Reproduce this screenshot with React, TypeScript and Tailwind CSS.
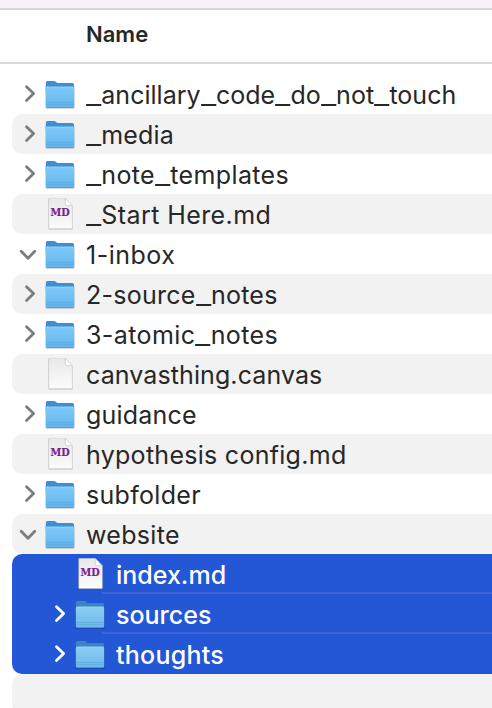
type Kind = 'folder' | 'md' | 'blank';
type Row = {
  name: string;
  kind: Kind;
  open?: boolean;
  nested?: boolean;
  tracking: string;
};

const rows: Row[] = [
  { name: '_ancillary_code_do_not_touch', kind: 'folder', tracking: 'tracking-[0.02px]' },
  { name: '_media', kind: 'folder', tracking: 'tracking-[0.15px]' },
  { name: '_note_templates', kind: 'folder', tracking: 'tracking-[0.36px]' },
  { name: '_Start Here.md', kind: 'md', tracking: 'tracking-[0.42px]' },
  { name: '1-inbox', kind: 'folder', open: true, tracking: 'tracking-[0.5px]' },
  { name: '2-source_notes', kind: 'folder', tracking: 'tracking-[0.25px]' },
  { name: '3-atomic_notes', kind: 'folder', tracking: 'tracking-[0.4px]' },
  { name: 'canvasthing.canvas', kind: 'blank', tracking: 'tracking-[0.1px]' },
  { name: 'guidance', kind: 'folder', tracking: 'tracking-[0.2px]' },
  { name: 'hypothesis config.md', kind: 'md', tracking: 'tracking-[0.28px]' },
  { name: 'subfolder', kind: 'folder', tracking: 'tracking-[0.3px]' },
  { name: 'website', kind: 'folder', open: true, tracking: 'tracking-[0.3px]' },
];

const selected: Row[] = [
  { name: 'index.md', kind: 'md', nested: true, tracking: 'tracking-[0px]' },
  { name: 'sources', kind: 'folder', nested: true, tracking: 'tracking-[0px]' },
  { name: 'thoughts', kind: 'folder', nested: true, tracking: 'tracking-[0.25px]' },
];

function Gradients() {
  return (
    <svg className="absolute h-0 w-0" aria-hidden="true">
      <defs>
        <linearGradient id="front" x1="0" y1="0" x2="0" y2="1">
          <stop offset="0" stopColor="#7fcaf8" />
          <stop offset="1" stopColor="#63b5ee" />
        </linearGradient>
        <linearGradient id="frontSelected" x1="0" y1="0" x2="0" y2="1">
          <stop offset="0" stopColor="#8accf2" />
          <stop offset="1" stopColor="#72b9e8" />
        </linearGradient>
        <linearGradient id="paper" x1="0" y1="0" x2="0" y2="1">
          <stop offset="0" stopColor="#e8e8e8" />
          <stop offset="1" stopColor="#fcfcfc" />
        </linearGradient>
      </defs>
    </svg>
  );
}

function Folder({ active }: { active?: boolean }) {
  return (
    <svg className="h-10 w-8 shrink-0" viewBox="0 0 32 40">
      <path d="M1.500 12H30.500V33.200q0 1.500-1.500 1.500H3Q1.500 34.700 1.500 33.200Z" fill="#000" opacity=".22" />
      <path d="M1.800 8.700Q1.800 7 3.500 7h6.300q1.200 0 2 .8l.8.600q.8.700 1.900.700h13.800q1.700 0 1.700 1.700V18H1.800Z" fill={active ? '#3f85bd' : '#3e8ed2'} />
      <path d="M1.800 14q0-1.300 1.300-1.300h26q1.100 0 1.100 1.300V32.300q0 1.400-1.400 1.400H3.200q-1.400 0-1.400-1.400Z" fill={active ? 'url(#frontSelected)' : 'url(#front)'} />
      <path d="M2.500 13.100h27" stroke="#98d8fc" strokeWidth=".8" />
      <path d="M2 28.400h28M2 30.400h28" stroke="#4a9dd7" strokeWidth=".7" opacity=".6" />
      <path d="M2.500 33.400h27" stroke="#4a94cb" strokeWidth=".7" />
    </svg>
  );
}

function Doc({ md }: { md?: boolean }) {
  return (
    <svg className="h-10 w-8 shrink-0" viewBox="0 0 32 40">
      <path d="M4.300 5h17.200l7.200 7.500V34.700q0 .7-.7.700H5q-.7 0-.7-.7Z" fill="#000" opacity=".2" />
      <path d="M4.800 4.500h16.500l7 7.200V34q0 .6-.6.600H5.400q-.6 0-.6-.6Z" fill="url(#paper)" stroke="#d0d0d0" strokeWidth=".5" />
      <path d="M21.300 4.500v5.700q0 1.500 1.500 1.500h5.500Z" fill="#fff" stroke="#bdbdbd" strokeWidth=".6" />
      {md && (
        <text x="6.600" y="22.300" textLength="19.200" lengthAdjust="spacingAndGlyphs" fontFamily="'DejaVu Serif', serif" fontSize="11.500" fontWeight="700" fill="#7c2090" stroke="#7c2090" strokeWidth=".2">
          MD
        </text>
      )}
    </svg>
  );
}

function Chevron({ open, active }: { open?: boolean; active?: boolean }) {
  return (
    <svg className={`h-10 w-8 shrink-0 ${active ? 'text-white' : 'text-[#7d7d7d]'}`} viewBox="0 0 32 40" fill="none" stroke="currentColor" strokeWidth="2.800" strokeLinecap="round" strokeLinejoin="round">
      <path d={open ? 'M9.200 17.200 16 24.300 22.800 17.200' : 'M14.500 12.700 21.600 19.600 14.500 26.500'} />
    </svg>
  );
}

function Label({ text }: { text: string }) {
  return (
    <>
      {text.split(/(_)/).map((part, i) =>
        part === '_' ? (
          <span key={i} className="inline-block w-[15.300px] origin-left scale-x-[1.33] tracking-normal">
            _
          </span>
        ) : (
          part
        ),
      )}
    </>
  );
}

function FileRow({ row, active, shaded, divider }: { row: Row; active?: boolean; shaded?: boolean; divider?: boolean }) {
  return (
    <div className={`flex h-10 ${row.nested ? 'pl-[30px]' : ''} ${shaded ? 'rounded-l-[10px] bg-[#f2f2f2]' : ''}`}>
      {row.kind === 'folder' ? <Chevron open={row.open} active={active} /> : <span className="w-8 shrink-0" />}
      {row.kind === 'folder' ? <Folder active={active} /> : <Doc md={row.kind === 'md'} />}
      <span className={`ml-[-4px] flex-1 whitespace-pre border-b-2 pl-[14px] leading-[43px] ${row.tracking} ${divider ? 'border-[#3b67db]' : 'border-transparent'}`}>
        <Label text={row.name} />
      </span>
    </div>
  );
}

export default function App() {
  return (
    <div className="h-[708px] w-[492px] overflow-hidden bg-white font-['Inter',sans-serif] text-[25px] text-[#272727]">
      <Gradients />
      <div className="h-[10px] border-b-2 border-[#d8d6d9] bg-[#f7f2fa]" />
      <header className="h-[54px] border-b-2 border-[#dadada] pl-[86px] text-[22px] font-semibold leading-[49px]">
        Name
      </header>
      <main className="ml-3 pt-[10px]">
        {rows.map((row, i) => (
          <FileRow key={row.name} row={row} shaded={i % 2 === 1} />
        ))}
        <div className="overflow-hidden rounded-l-[10px] bg-[#2457d6] font-medium text-white">
          {selected.map((row, i) => (
            <FileRow key={row.name} row={row} active divider={i < 2} />
          ))}
        </div>
        <div className="h-10 rounded-l-[10px] bg-[#f2f2f2]" />
      </main>
    </div>
  );
}
